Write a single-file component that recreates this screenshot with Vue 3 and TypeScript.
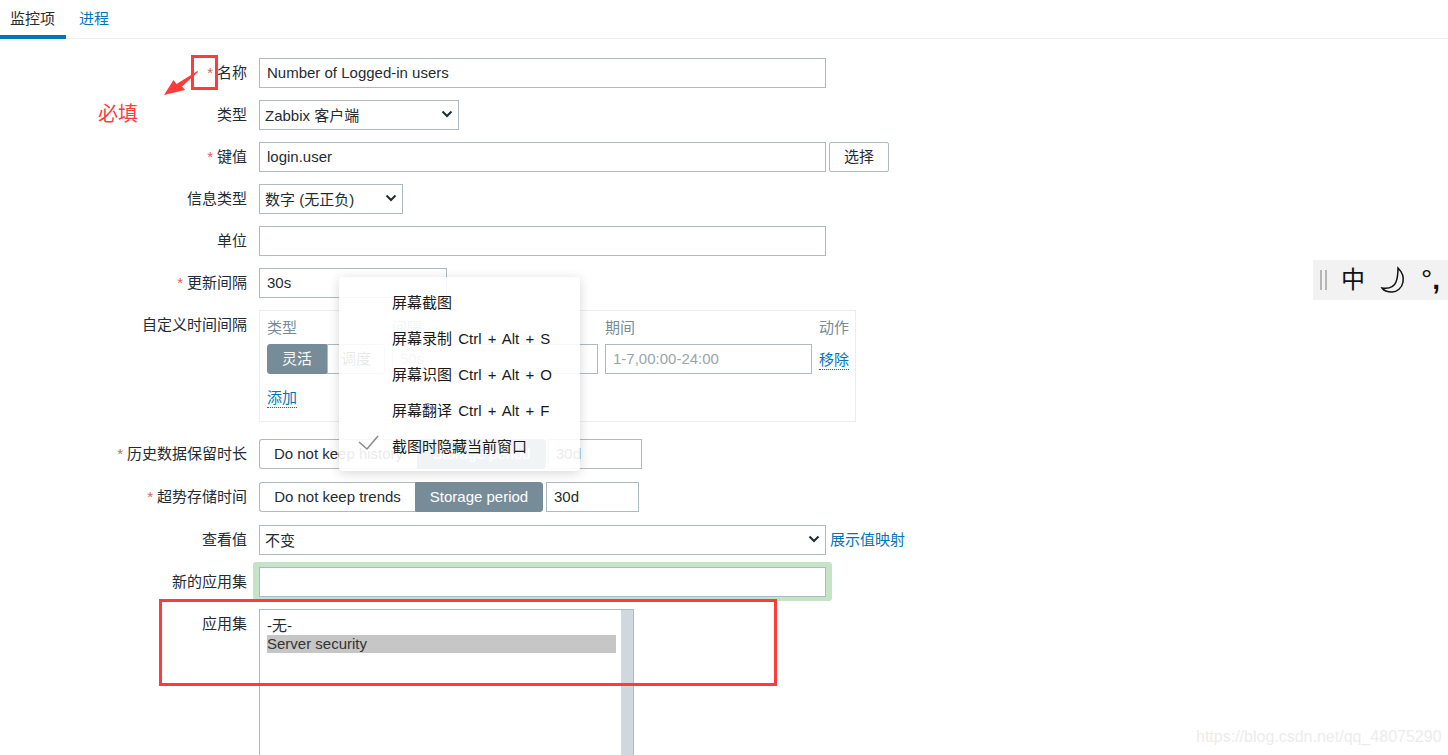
<script setup lang="ts">
interface MenuItem { label: string; checked?: boolean }
const menu: MenuItem[] = [
  { label: '屏幕截图' },
  { label: '屏幕录制 Ctrl + Alt + S' },
  { label: '屏幕识图 Ctrl + Alt + O' },
  { label: '屏幕翻译 Ctrl + Alt + F' },
  { label: '截图时隐藏当前窗口', checked: true },
]
</script>

<template>
  <div class="page">
    <nav class="tabs">
      <a class="tab active">监控项</a>
      <a class="tab">进程</a>
    </nav>

    <form class="form" @submit.prevent>
      <div class="row">
        <label class="lbl"><i>*</i>名称</label>
        <div class="ctl"><input class="inp w567" value="Number of Logged-in users" /></div>
      </div>
      <div class="row">
        <label class="lbl">类型</label>
        <div class="ctl">
          <div class="sel w200"><select><option>Zabbix 客户端</option></select><svg class="chev" viewBox="0 0 12 8"><path d="M1.5 1.5 6 6l4.5-4.5" /></svg></div>
        </div>
      </div>
      <div class="row">
        <label class="lbl"><i>*</i>键值</label>
        <div class="ctl"><input class="inp w567" value="login.user" /><button class="btn" type="button">选择</button></div>
      </div>
      <div class="row">
        <label class="lbl">信息类型</label>
        <div class="ctl">
          <div class="sel w144"><select><option>数字 (无正负)</option></select><svg class="chev" viewBox="0 0 12 8"><path d="M1.5 1.5 6 6l4.5-4.5" /></svg></div>
        </div>
      </div>
      <div class="row">
        <label class="lbl">单位</label>
        <div class="ctl"><input class="inp w567" /></div>
      </div>
      <div class="row">
        <label class="lbl"><i>*</i>更新间隔</label>
        <div class="ctl"><input class="inp w188" value="30s" /></div>
      </div>
      <div class="row custom-row">
        <label class="lbl top">自定义时间间隔</label>
        <div class="custom">
          <div class="cgrid">
            <span class="th">类型</span><span class="th">间隔</span><span class="th">期间</span><span class="th">动作</span>
            <div class="seg small"><span class="on">灵活</span><span class="off">调度</span></div>
            <input class="inp full" placeholder="50s" />
            <input class="inp full" placeholder="1-7,00:00-24:00" />
            <a class="dot">移除</a>
          </div>
          <a class="dot add">添加</a>
        </div>
      </div>
      <div class="row history">
        <label class="lbl"><i>*</i>历史数据保留时长</label>
        <div class="ctl">
          <div class="seg"><span class="off h1">Do not keep history</span><span class="on h2">Storage period</span></div>
          <input class="inp w94" value="30d" />
        </div>
      </div>
      <div class="row">
        <label class="lbl"><i>*</i>超势存储时间</label>
        <div class="ctl">
          <div class="seg"><span class="off t1">Do not keep trends</span><span class="on t2">Storage period</span></div>
          <input class="inp w93" value="30d" />
        </div>
      </div>
      <div class="row">
        <label class="lbl">查看值</label>
        <div class="ctl">
          <div class="sel w567"><select><option>不变</option></select><svg class="chev" viewBox="0 0 12 8"><path d="M1.5 1.5 6 6l4.5-4.5" /></svg></div>
          <a class="link">展示值映射</a>
        </div>
      </div>
      <div class="row">
        <label class="lbl">新的应用集</label>
        <div class="ctl"><div class="glow"><input class="inp w567" /></div></div>
      </div>
      <div class="row">
        <label class="lbl top">应用集</label>
        <div class="listbox">
          <div class="opts">
            <div class="opt">-无-</div>
            <div class="opt sel-opt">Server security</div>
          </div>
          <div class="sbar"></div>
        </div>
      </div>
    </form>

    <!-- context menu over the form -->
    <ul class="menu">
      <li v-for="m in menu" :key="m.label">
        <svg v-if="m.checked" class="check" viewBox="0 0 22 16"><path d="M1 7l8 7L20 1" /></svg>
        {{ m.label }}
      </li>
    </ul>

    <!-- input method toolbar -->
    <div class="ime">
      <span class="grip"></span>
      <span class="zh">中</span>
      <svg class="moon" viewBox="0 0 26 28"><path d="M18 2C22 6 24 11 23 16 22 22 17 26 12 26 8 26 4 25 2 22 9 23 14 21 16 16 18 11 18 6 18 2z" /></svg>
      <span class="punc">°<b>,</b></span>
    </div>

    <!-- screenshot annotations -->
    <div class="mark m1"></div>
    <div class="mark m2"></div>
    <svg class="arrow" viewBox="0 0 40 30"><path d="M35 1 19 15.500l3 3.500L1 24l9.500-15 3 4L34.500 0z" /></svg>
    <span class="note">必填</span>
    <span class="wm">https://blog.csdn.net/qq_48075290</span>
  </div>
</template>

<style>
html, body { margin: 0; background: #fff; overflow: hidden; }
</style>

<style scoped>
.page {
  position: relative;
  width: 1448px;
  height: 755px;
  overflow: hidden;
  background: #fff;
  color: #1f2c33;
  font: 15px/18px "Liberation Sans", "Noto Sans CJK SC", sans-serif;
}
.tabs { display: flex; height: 38px; border-bottom: 1px solid #ebeef0; }
.tab { width: 66px; box-sizing: border-box; height: 39px; padding-top: 10px; padding-right: 1px; text-align: center; color: #0275b8; }
.tab:nth-child(2) { width: auto; padding-left: 13px; }
.tab.active { color: #1f2c33; border-bottom: 4px solid #0275b8; }

.form { display: flex; flex-direction: column; gap: 12px; padding-top: 19px; }
.row { display: grid; grid-template-columns: 247px 1fr; column-gap: 12px; min-height: 30px; }
.lbl { text-align: right; line-height: 30px; white-space: nowrap; }
.lbl.top { line-height: 30px; }
.lbl i { color: #e45959; font-style: normal; margin-right: 4px; }
.ctl { display: flex; align-items: center; gap: 3px; height: 30px; }
.history { margin-top: 5px; }
.history + .row { margin-top: 1px; }
.history + .row + .row { margin-top: 1px; }

.inp {
  box-sizing: border-box;
  height: 30px;
  margin: 0;
  padding: 0 7px 2px;
  border: 1px solid #acbbc3;
  border-radius: 0;
  background: #fff;
  color: #1f2c33;
  font: inherit;
  outline: none;
}
.inp::placeholder { color: #9aa5ab; opacity: 1; }
.w567 { width: 567px; }
.w188 { width: 188px; }
.w94 { width: 94px; margin-left: -1px; }
.w93 { width: 93px; }
.full { width: 100%; }

.sel { position: relative; height: 30px; box-sizing: border-box; }
.sel.w200 { width: 200px; }
.sel.w144 { width: 144px; }
.sel select {
  appearance: none;
  width: 100%;
  height: 30px;
  box-sizing: border-box;
  padding: 1px 5px 0;
  border: 1px solid #acbbc3;
  border-radius: 0;
  background: #fff;
  color: #1f2c33;
  font: inherit;
  outline: none;
}
.chev { position: absolute; right: 6px; top: 10px; width: 12px; height: 8px; fill: none; stroke: #1f2c33; stroke-width: 2; }

.btn {
  box-sizing: border-box;
  width: 60px;
  height: 30px;
  margin: 0;
  padding: 0;
  border: 1px solid #acbbc3;
  border-radius: 2px;
  background: #fff;
  color: #1f2c33;
  font: inherit;
}
.link { color: #0275b8; margin-left: 1px; }

.custom { box-sizing: border-box; width: 597px; height: 112px; padding: 8px 7px; border: 1px solid #ebeef0; }
.cgrid { display: grid; grid-template-columns: 118px 206px 207px 30px; column-gap: 7px; row-gap: 7px; align-items: center; margin-right: -4px; }
.th { color: #768d99; white-space: nowrap; line-height: 18px; }
.dot { color: #0275b8; border-bottom: 1px dotted #0275b8; width: fit-content; line-height: 18px; }
.cgrid .dot { margin-top: 2px; }
.add { display: block; margin-top: 15px; }

.seg { display: flex; height: 30px; box-sizing: border-box; }
.seg span { box-sizing: border-box; height: 30px; line-height: 28px; text-align: center; white-space: nowrap; border: 1px solid #acbbc3; }
.seg .on { background: #768d99; border-color: #768d99; color: #fff; }
.seg .off { background: #fff; border-right: 0; }
.seg span:first-child { border-radius: 3px 0 0 3px; }
.seg span:last-child { border-radius: 0 3px 3px 0; }
.small .on { width: 60px; }
.small .off { width: 58px; border-right: 1px solid #acbbc3; }
.h1 { width: 158px; }
.h2 { width: 129px; }
.t1 { width: 156px; }
.t2 { width: 128px; }

.glow { padding: 5px 6px 4px; margin: -5px -6px -4px; background: #c5e3c7; border-radius: 3px; line-height: 0; }

.listbox { display: flex; box-sizing: border-box; width: 375px; height: 160px; border: 1px solid #acbbc3; }
.opts { flex: 1; padding: 7px 5px 0 7px; }
.opt { height: 18px; line-height: 18px; }
.sel-opt { background: #c6c6c6; color: #333; }
.sbar { width: 12px; background: #cfd8df; }

.menu {
  position: absolute;
  left: 339px;
  top: 277px;
  box-sizing: border-box;
  width: 241px;
  height: 194px;
  margin: 0;
  padding: 7px 0;
  list-style: none;
  background: rgba(255, 255, 255, 0.9);
  border-radius: 4px;
  box-shadow: 0 2px 12px rgba(0, 0, 0, 0.16);
  color: #1a1a1a;
  word-spacing: 2px;
}
.menu li { position: relative; height: 36px; line-height: 37px; padding-left: 53px; white-space: nowrap; }
.check { position: absolute; left: 19px; top: 7px; width: 22px; height: 16px; fill: none; stroke: #8a8a8a; stroke-width: 1.500; }

.ime {
  position: absolute;
  left: 1313px;
  top: 260px;
  width: 135px;
  height: 40px;
  display: flex;
  align-items: center;
  background: #f2f2f2;
  color: #111;
}
.grip { width: 3px; height: 20px; margin-left: 7px; border-left: 2px solid #b5b5b5; border-right: 2px solid #b5b5b5; }
.zh { margin-left: 14px; font-size: 24px; line-height: 24px; }
.moon { width: 26px; height: 28px; margin-left: 15px; fill: none; stroke: #111; stroke-width: 1.500; }
.punc { margin-left: 15px; font-size: 28px; line-height: 24px; white-space: nowrap; }
.punc b { font-weight: 700; }

.mark { position: absolute; box-sizing: border-box; border: 3px solid #ff3b3b; }
.m1 { left: 191px; top: 55px; width: 27px; height: 35px; }
.m2 { left: 159px; top: 599px; width: 618px; height: 87px; }
.arrow { position: absolute; left: 163px; top: 71px; width: 40px; height: 30px; fill: #ff3b3b; }
.note { position: absolute; left: 98px; top: 101px; font-size: 20px; line-height: 26px; color: #ff3b3b; }
.wm { position: absolute; left: 1196px; top: 727px; font-size: 16px; line-height: 20px; color: #ececec; white-space: nowrap; }
</style>
